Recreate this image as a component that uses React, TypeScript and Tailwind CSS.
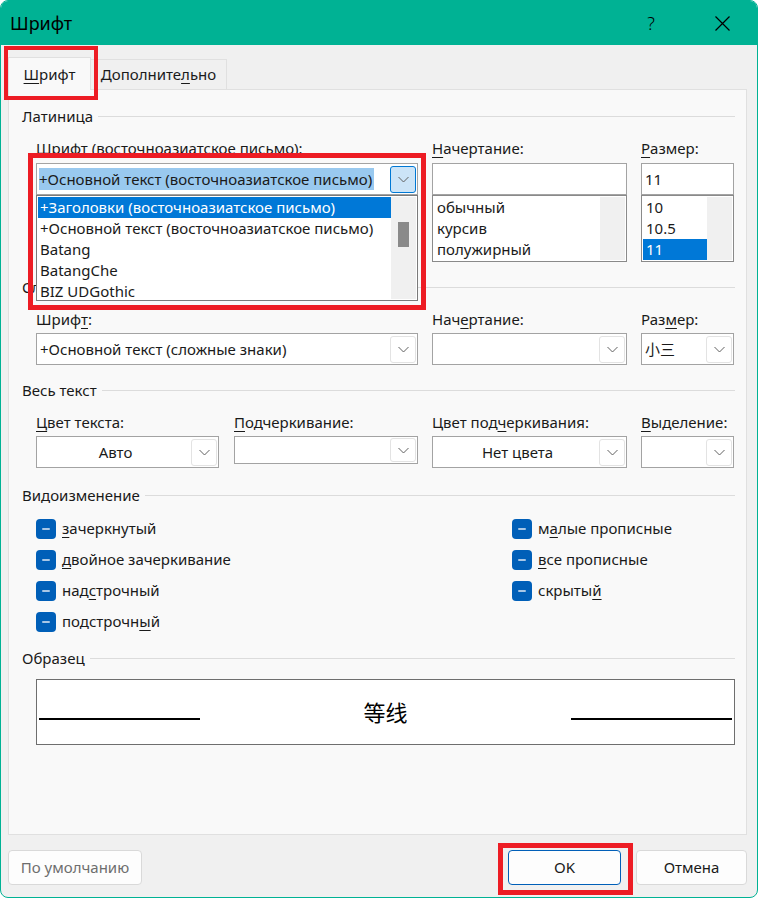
import React from "react"

function U({ children }: { children: React.ReactNode }) {
  return <span className="underline decoration-1 underline-offset-[3px]">{children}</span>
}

function Chevron() {
  return (
    <svg width="11" height="7" viewBox="0 0 11 7">
      <polyline points="0.5,1 5.5,6 10.5,1" fill="none" stroke="#606060" strokeWidth="1" />
    </svg>
  )
}

function DropBtn({ focused = false, small = false }: { focused?: boolean; small?: boolean }) {
  return (
    <div
      className={`mr-[1px] flex w-[26px] shrink-0 items-center justify-center rounded-[3px] border ${
        small ? "h-[24px]" : "h-[27px]"
      } ${focused ? "border-[#0078d4] bg-[#cce4f7]" : "border-[#e3e3e3] bg-white"}`}
    >
      <Chevron />
    </div>
  )
}

function Combo({
  text,
  center = false,
  small = false,
  className = "",
}: {
  text?: React.ReactNode
  center?: boolean
  small?: boolean
  className?: string
}) {
  return (
    <div
      className={`flex items-center border border-[#a3a3a3] bg-white ${small ? "h-[28px]" : "h-[32px]"} ${className}`}
    >
      <div className={`min-w-0 flex-1 overflow-hidden whitespace-nowrap pl-[3px] ${center ? "text-center" : ""}`}>
        {text}
      </div>
      <DropBtn small={small} />
    </div>
  )
}

function Label({ children }: { children: React.ReactNode }) {
  return <div className="flex h-[20px] items-center whitespace-nowrap">{children}</div>
}

function GroupHeader({ children, className = "" }: { children: React.ReactNode; className?: string }) {
  return (
    <div className={`flex h-[20px] items-center ${className}`}>
      <span className="whitespace-nowrap">{children}</span>
      <div className="ml-[5px] h-px flex-1 bg-[#dcdcdc]" />
    </div>
  )
}

function Check({ children }: { children: React.ReactNode }) {
  return (
    <div className="flex h-[31px] items-center">
      <div className="flex h-[20px] w-[20px] items-center justify-center rounded-[4px] bg-[#005fb8]">
        <div className="h-[2px] w-[8px] rounded-full bg-[#a9c7e6]" />
      </div>
      <span className="ml-[6px] whitespace-nowrap">{children}</span>
    </div>
  )
}

function ListBox({
  items,
  selected,
  className = "",
}: {
  items: string[]
  selected: number
  className?: string
}) {
  return (
    <div className={`flex h-[67px] border border-[#8a8a8a] bg-white p-[1px] ${className}`}>
      <div className="flex-1">
        {items.map((it, i) => (
          <div
            key={it}
            className={`flex h-[21px] items-center pl-[3px] ${i === selected ? "bg-[#0078d7] text-white" : ""}`}
          >
            {it}
          </div>
        ))}
      </div>
      <div className="w-[25px] bg-[#f0f0f0]" />
    </div>
  )
}

export default function App() {
  return (
    <div className="min-h-screen bg-white font-['Noto_Sans','Noto_Sans_CJK_SC',sans-serif] text-[15px] text-[#1a1a1a]">
      <div className="relative h-[898px] w-[758px] overflow-hidden rounded-[8px] border border-[#00b294] bg-[#f0f0f0]">
        {/* title bar */}
        <div className="flex h-[44px] items-center bg-[#00b294] pl-[9px] pr-[27px] text-black">
          <span className="text-[18px]">Шрифт</span>
          <span className="ml-auto text-[18px] font-light">?</span>
          <svg className="ml-[60px]" width="15" height="15" viewBox="0 0 15 15">
            <path d="M0.5 0.5 L14.5 14.5 M14.5 0.5 L0.5 14.5" stroke="#000" strokeWidth="1.2" />
          </svg>
        </div>

        {/* tabs */}
        <div className="flex h-[44px] items-start pl-[7px] pt-[12px]">
          <div className="relative z-10 flex h-[33px] w-[83px] items-center justify-center border border-b-0 border-[#e0e0e0] bg-[#f9f9f9]">
            <span>
              <U>Ш</U>рифт
            </span>
          </div>
          <div className="mt-[2px] flex h-[30px] w-[136px] items-center justify-center border border-l-0 border-b-0 border-[#e0e0e0] bg-[#f0f0f0]">
            <span>
              Дополните<U>л</U>ьно
            </span>
          </div>
        </div>
        <div className="absolute left-[3px] top-[45px] z-20 h-[54px] w-[94px] border-[4px] border-[#ed1c24]" />

        {/* panel */}
        <div className="relative ml-[7px] h-[746px] w-[739px] border border-[#e0e0e0] bg-[#f9f9f9] pl-[13px] pr-[11px] pt-[16px]">
          <GroupHeader>Латиница</GroupHeader>

          <div className="ml-[14px] mt-[12px] flex gap-[14px]">
            <div className="relative z-10 w-[382px]">
              <Label>Шрифт (восточноазиатское письмо):</Label>
              <div className="relative mt-[5px]">
                <div className="flex h-[32px] items-center border border-[#a3a3a3] bg-white">
                  <div className="min-w-0 flex-1 pl-[2px]">
                    <span className="whitespace-nowrap bg-[#99c9ef] py-[1px] pr-[2px]">
                      +Основной текст (восточноазиатское письмо)
                    </span>
                  </div>
                  <DropBtn focused />
                </div>
                <div className="absolute left-0 top-full flex h-[106px] w-full border border-[#7a7a7a] bg-white p-[1px]">
                  <div className="flex-1">
                    <div className="flex h-[21px] items-center bg-[#0078d7] pl-[2px] text-white">
                      +Заголовки (восточноазиатское письмо)
                    </div>
                    <div className="flex h-[21px] items-center pl-[2px]">+Основной текст (восточноазиатское письмо)</div>
                    <div className="flex h-[21px] items-center pl-[2px]">Batang</div>
                    <div className="flex h-[21px] items-center pl-[2px]">BatangChe</div>
                    <div className="flex h-[21px] items-center pl-[2px]">BIZ UDGothic</div>
                  </div>
                  <div className="w-[25px] bg-[#f0f0f0] pl-[7px] pt-[25px]">
                    <div className="h-[25px] w-[11px] bg-[#8a8a8a]" />
                  </div>
                </div>
              </div>
              <div className="absolute left-[-8px] top-[15px] h-[157px] w-[398px] border-[5px] border-[#ed1c24]" />
            </div>
            <div className="w-[195px]">
              <Label>
                <U>Н</U>ачертание:
              </Label>
              <div className="mt-[5px] h-[32px] border border-[#a3a3a3] bg-white" />
              <ListBox items={["обычный", "курсив", "полужирный"]} selected={-1} />
            </div>
            <div className="w-[93px]">
              <Label>
                <U>Р</U>азмер:
              </Label>
              <div className="mt-[5px] flex h-[32px] items-center border border-[#a3a3a3] bg-white pl-[3px]">11</div>
              <ListBox items={["10", "10.5", "11"]} selected={2} />
            </div>
          </div>

          <GroupHeader className="mt-[15px]">Сложные знаки</GroupHeader>

          <div className="ml-[14px] mt-[12px] flex gap-[14px]">
            <div className="w-[382px]">
              <Label>
                Шриф<U>т</U>:
              </Label>
              <Combo className="mt-[4px]" text="+Основной текст (сложные знаки)" />
            </div>
            <div className="w-[195px]">
              <Label>
                Нач<U>е</U>ртание:
              </Label>
              <Combo className="mt-[4px]" />
            </div>
            <div className="w-[93px]">
              <Label>
                Раз<U>м</U>ер:
              </Label>
              <Combo className="mt-[4px]" text={<span className="font-['Noto_Sans_CJK_SC',sans-serif]">小三</span>} />
            </div>
          </div>

          <GroupHeader className="mt-[15px]">Весь текст</GroupHeader>

          <div className="ml-[14px] mt-[12px] flex">
            <div className="w-[183px]">
              <Label>
                <U>Ц</U>вет текста:
              </Label>
              <Combo className="mt-[4px]" text="Авто" center />
            </div>
            <div className="ml-[15px] w-[184px]">
              <Label>
                <U>П</U>одчеркивание:
              </Label>
              <Combo className="mt-[4px]" small />
            </div>
            <div className="ml-[14px] w-[195px]">
              <Label>
                Цвет под<U>ч</U>еркивания:
              </Label>
              <Combo className="mt-[4px]" text="Нет цвета" center />
            </div>
            <div className="ml-[14px] w-[93px]">
              <Label>
                <U>В</U>ыделение:
              </Label>
              <Combo className="mt-[4px]" />
            </div>
          </div>

          <GroupHeader className="mt-[17px]">Видоизменение</GroupHeader>

          <div className="ml-[14px] mt-[8px] flex">
            <div className="w-[476px]">
              <Check>
                <U>з</U>ачеркнутый
              </Check>
              <Check>
                <U>д</U>войное зачеркивание
              </Check>
              <Check>
                над<U>с</U>трочный
              </Check>
              <Check>
                подстрочн<U>ы</U>й
              </Check>
            </div>
            <div>
              <Check>
                м<U>а</U>лые прописные
              </Check>
              <Check>
                <U>в</U>се прописные
              </Check>
              <Check>
                скрыты<U>й</U>
              </Check>
            </div>
          </div>

          <GroupHeader className="mt-[11px]">Образец</GroupHeader>

          <div className="ml-[14px] mt-[11px] flex h-[66px] w-[699px] items-start justify-between border border-[#6e6e6e] bg-white px-[2px]">
            <div className="mt-[38px] h-[2px] w-[161px] bg-black" />
            <span className="mt-[16px] font-['Noto_Sans_CJK_SC',sans-serif] text-[22px] leading-[30px] text-black">
              等线
            </span>
            <div className="mt-[38px] h-[2px] w-[161px] bg-black" />
          </div>
        </div>

        {/* footer */}
        <div className="mt-[15px] flex pl-[7px] pr-[10px]">
          <div className="flex h-[35px] w-[134px] items-center justify-center rounded-[4px] border border-[#d9d9d9] bg-[#fdfdfd] text-[#6e6e6e]">
            По умолчанию
          </div>
          <div className="relative ml-auto">
            <div className="flex h-[35px] w-[113px] items-center justify-center rounded-[4px] border border-[#005fb8] bg-[#fdfdfd]">
              OK
            </div>
            <div className="absolute left-[-10px] top-[-7px] h-[52px] w-[135px] border-[5px] border-[#ed1c24]" />
          </div>
          <div className="ml-[15px] flex h-[35px] w-[111px] items-center justify-center rounded-[4px] border border-[#d9d9d9] bg-[#fdfdfd]">
            Отмена
          </div>
        </div>
      </div>
    </div>
  )
}
